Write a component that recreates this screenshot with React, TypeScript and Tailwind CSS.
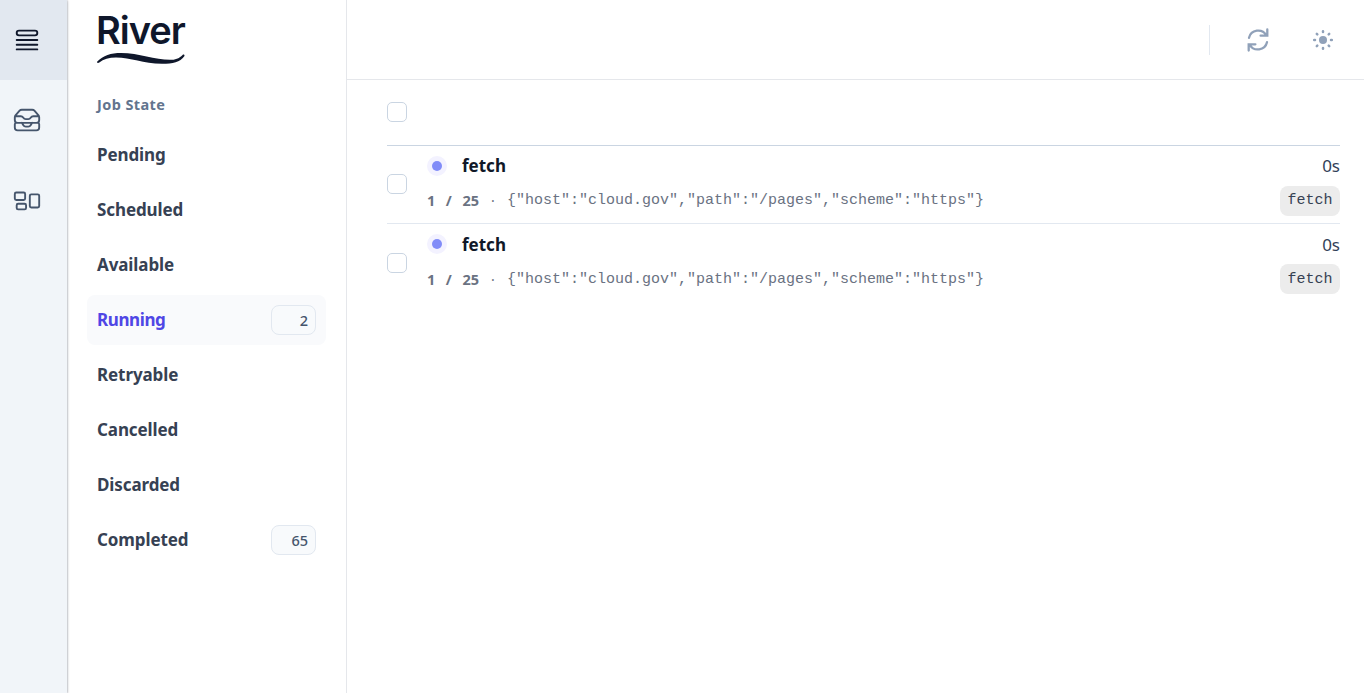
import type { ComponentType } from "react";
import { HiOutlineQueueList, HiOutlineInboxStack, HiOutlineRectangleGroup } from "react-icons/hi2";

type State = { name: string; count?: number; active?: boolean };

const states: State[] = [
  { name: "Pending" },
  { name: "Scheduled" },
  { name: "Available" },
  { name: "Running", count: 2, active: true },
  { name: "Retryable" },
  { name: "Cancelled" },
  { name: "Discarded" },
  { name: "Completed", count: 65 },
];

const jobs = [
  { id: 1, kind: "fetch", attempt: 1, max: 25, args: '{"host":"cloud.gov","path":"/pages","scheme":"https"}', age: "0s", queue: "fetch" },
  { id: 2, kind: "fetch", attempt: 1, max: 25, args: '{"host":"cloud.gov","path":"/pages","scheme":"https"}', age: "0s", queue: "fetch" },
];

const navItems: { label: string; icon: ComponentType<{ className?: string }>; active?: boolean }[] = [
  { label: "Jobs", icon: HiOutlineQueueList, active: true },
  { label: "Queues", icon: HiOutlineInboxStack },
  { label: "Workflows", icon: HiOutlineRectangleGroup },
];

function Checkbox() {
  return <input type="checkbox" className="block size-5 shrink-0 appearance-none rounded-[5px] border border-slate-300 bg-white" />;
}

function RefreshIcon() {
  return (
    <svg className="size-[30px]" viewBox="0 0 30 30" fill="none" stroke="currentColor" strokeWidth="2.3" strokeLinecap="round" strokeLinejoin="miter">
      <path d="M24.3 4.5v6.2h-6.7M6 12.8A9.4 9.4 0 0 1 23.3 10.3M5.7 25.5v-6.2h6.7M24 17.2A9.4 9.4 0 0 1 6.7 19.7" />
    </svg>
  );
}

function SunIcon() {
  return (
    <svg className="size-[30px]" viewBox="0 0 30 30" fill="none" stroke="currentColor" strokeWidth="2.5" strokeLinecap="round">
      <circle cx="15" cy="15" r="4" fill="currentColor" stroke="none" />
      <path d="M15 7v-.8M15 23.8V23M23 15h.8M6.2 15H7M20.7 9.3l.5-.5M8.8 21.2l.5-.5M20.7 20.7l.5.5M8.8 8.8l.5.5" />
    </svg>
  );
}

function Logo() {
  return (
    <div className="h-[79px] px-[30px] pt-[11px] text-slate-900">
      <div className="-ml-px h-[41px] font-['Inter',sans-serif] text-[38px] leading-[39px] font-semibold tracking-[-1px]">River</div>
      <svg className="block h-3 w-[88px]" viewBox="0 0 88 12" fill="currentColor">
        <path d="M.3 9.6C6 3.5 14 1 24 1c18 0 34 6.8 49 6.8 5 0 9-1.2 12.6-4.9.9-.9 2.5.1 1.7 1.3C83 10 76 11.8 65 11.8 46 11.8 34 5.6 19 5.6 12 5.6 6.5 7.4 2.3 10.5 1 11.5-.6 10.7.3 9.6Z" />
      </svg>
    </div>
  );
}

export default function App() {
  return (
    <div className="flex h-[693px] overflow-hidden bg-white font-['Noto_Sans',sans-serif]">
      <nav className="z-10 flex w-[67px] shrink-0 flex-col bg-slate-100 shadow-[0_1px_3px_0_rgb(15_23_42/0.25),0_0_2px_0_rgb(15_23_42/0.35)]">
        {navItems.map(({ label, icon: Icon, active }) => (
          <a
            key={label}
            aria-label={label}
            className={active ? "flex h-20 items-center bg-slate-200 pl-3 text-slate-900" : "flex h-20 items-center pl-3 text-slate-600"}
          >
            <Icon className="size-[30px]" />
          </a>
        ))}
      </nav>

      <aside className="flex w-[280px] shrink-0 flex-col border-r border-gray-200">
        <Logo />
        <div className="px-5">
          <h2 className="flex h-[51px] items-center px-2.5 text-[14.5px] font-bold tracking-[0.4px] text-slate-500">Job State</h2>
          <ul className="flex flex-col gap-[5px]">
            {states.map((s) => (
              <li
                key={s.name}
                className={
                  s.active
                    ? "flex h-[50px] items-center justify-between rounded-lg bg-[#f9fafc] px-2.5 text-[17px] font-bold tracking-[-0.4px] text-[#4f46e5]"
                    : "flex h-[50px] items-center justify-between rounded-lg px-2.5 text-[17px] font-bold tracking-[-0.1px] text-gray-700"
                }
              >
                {s.name}
                {s.count !== undefined && (
                  <span className="flex h-[30px] w-[45px] items-center justify-end rounded-lg border border-slate-200 bg-slate-50 pt-px pr-[7px] text-[14.5px] font-medium tracking-normal text-slate-600">
                    {s.count}
                  </span>
                )}
              </li>
            ))}
          </ul>
        </div>
      </aside>

      <main className="flex min-w-0 flex-1 flex-col">
        <header className="flex h-20 shrink-0 items-center justify-end border-b border-gray-200 pr-[26px] text-slate-400">
          <div className="h-[30px] w-px bg-slate-200" />
          <button type="button" aria-label="Refresh" className="ml-[33px]">
            <RefreshIcon />
          </button>
          <button type="button" aria-label="Theme" className="ml-[35px]">
            <SunIcon />
          </button>
        </header>

        <section className="pr-6 pl-10">
          <div className="flex h-[66px] items-center border-b border-slate-300 pb-0.5">
            <Checkbox />
          </div>
          <ul className="divide-y divide-slate-200">
            {jobs.map((job, i) => (
              <li key={job.id} className={i === 0 ? "flex h-[78px]" : "flex h-[78px] pt-px"}>
                <div className="pt-7">
                  <Checkbox />
                </div>
                <div className="ml-5 flex min-w-0 flex-1 flex-col">
                  <div className="flex h-10 items-center">
                    <span className={i === 0 ? "flex size-5 items-center justify-center rounded-full bg-[#f3f2ff]" : "-mt-0.5 flex size-5 items-center justify-center rounded-full bg-[#f3f2ff]"}>
                      <span className="size-2.5 rounded-full bg-[#818cf8]" />
                    </span>
                    <span className="-mt-px ml-[15px] text-[17px] font-bold text-gray-900">{job.kind}</span>
                    <span className="ml-auto text-[17px] text-slate-700">{job.age}</span>
                  </div>
                  <div className="flex h-[30px] items-center text-gray-500">
                    <span className="flex w-[52px] justify-between text-[14.5px] font-bold">
                      <span>{job.attempt}</span>
                      <span>/</span>
                      <span>{job.max}</span>
                    </span>
                    <span className="flex w-7 justify-center pb-0.5 text-[14px]">·</span>
                    <span className="pt-px font-['Liberation_Mono',monospace] text-[15px]">{job.args}</span>
                    <span className={i === 0 ? "ml-auto flex h-[30px] w-[60px] items-center justify-center rounded-lg bg-[#ececec] pt-px font-['Liberation_Mono',monospace] text-[15px] text-gray-700" : "-mt-0.5 ml-auto flex h-[30px] w-[60px] items-center justify-center rounded-lg bg-[#ececec] pt-[3px] font-['Liberation_Mono',monospace] text-[15px] text-gray-700"}>
                      {job.queue}
                    </span>
                  </div>
                </div>
              </li>
            ))}
          </ul>
        </section>
      </main>
    </div>
  );
}
